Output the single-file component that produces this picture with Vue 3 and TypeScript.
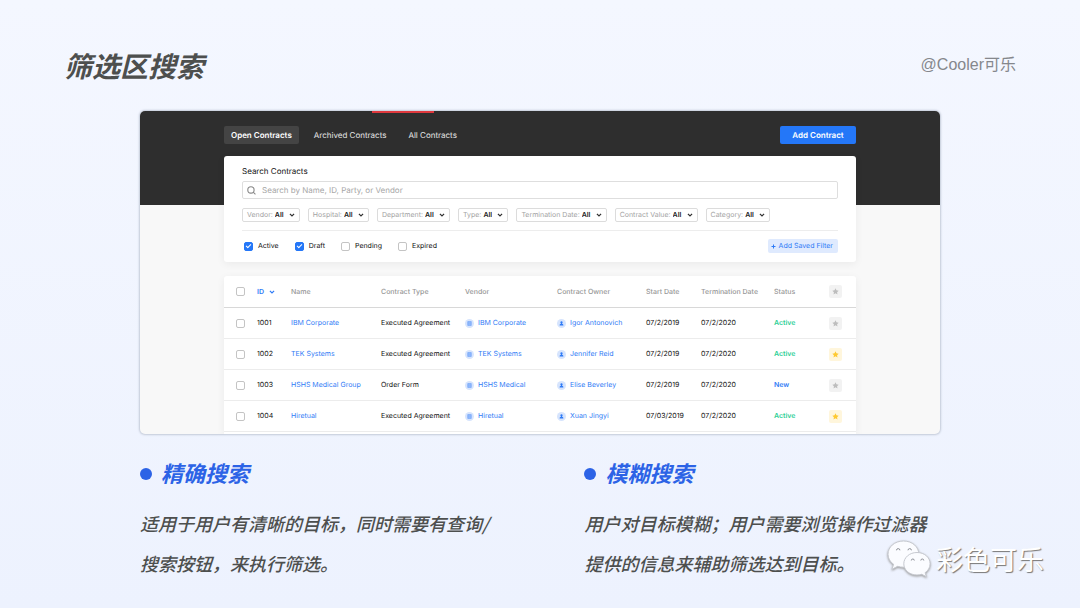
<script setup lang="ts">
import { ref } from 'vue'

interface Contract {
  id: string
  name: string
  type: string
  vendor: string
  owner: string
  start: string
  end: string
  status: 'Active' | 'New'
  starred: boolean
  selected: boolean
}

const tabs = ['Open Contracts', 'Archived Contracts', 'All Contracts']
const activeTab = ref(tabs[0])
const query = ref('')

const filters = ['Vendor', 'Hospital', 'Department', 'Type', 'Termination Date', 'Contract Value', 'Category']

const states = ref([
  { label: 'Active', checked: true },
  { label: 'Draft', checked: true },
  { label: 'Pending', checked: false },
  { label: 'Expired', checked: false },
])

const columns = ['Name', 'Contract Type', 'Vendor', 'Contract Owner', 'Start Date', 'Termination Date', 'Status']

const contracts = ref<Contract[]>([
  { id: '1001', name: 'IBM Corporate', type: 'Executed Agreement', vendor: 'IBM Corporate', owner: 'Igor Antonovich', start: '07/2/2019', end: '07/2/2020', status: 'Active', starred: false, selected: false },
  { id: '1002', name: 'TEK Systems', type: 'Executed Agreement', vendor: 'TEK Systems', owner: 'Jennifer Reid', start: '07/2/2019', end: '07/2/2020', status: 'Active', starred: true, selected: false },
  { id: '1003', name: 'HSHS Medical Group', type: 'Order Form', vendor: 'HSHS Medical', owner: 'Elise Beverley', start: '07/2/2019', end: '07/2/2020', status: 'New', starred: false, selected: false },
  { id: '1004', name: 'Hiretual', type: 'Executed Agreement', vendor: 'Hiretual', owner: 'Xuan Jingyi', start: '07/03/2019', end: '07/2/2020', status: 'Active', starred: true, selected: false },
])

const notes = [
  { title: '精确搜索', lines: ['适用于用户有清晰的目标，同时需要有查询/', '搜索按钮，来执行筛选。'] },
  { title: '模糊搜索', lines: ['用户对目标模糊；用户需要浏览操作过滤器', '提供的信息来辅助筛选达到目标。'] },
]

const starPath = 'M8 .8l2.200 4.600 5 .7-3.600 3.500.9 5L8 12.200l-4.500 2.400.9-5L.8 6.100l5-.7z'
</script>

<template>
  <div class="slide">
    <header class="top">
      <h1>筛选区搜索</h1>
      <span class="handle">@Cooler可乐</span>
    </header>

    <main class="content">
      <section class="app">
        <div class="bar">
          <nav class="tabs">
            <button
              v-for="tab in tabs"
              :key="tab"
              type="button"
              class="tab"
              :class="{ current: tab === activeTab }"
              @click="activeTab = tab"
            >{{ tab }}</button>
          </nav>
          <button type="button" class="add">Add Contract</button>
        </div>

        <div class="panels">
          <div class="panel search">
            <label class="search-title" for="query">Search Contracts</label>
            <div class="search-box">
              <svg viewBox="0 0 16 16" aria-hidden="true">
                <circle cx="7" cy="7" r="5.6" />
                <path d="M11 11l4 4" />
              </svg>
              <input id="query" v-model="query" type="text" placeholder="Search by Name, ID, Party, or Vendor">
            </div>

            <div class="filters">
              <label v-for="f in filters" :key="f" class="filter">
                <span>{{ f }}:</span>
                <select><option>All</option></select>
                <svg viewBox="0 0 10 10" aria-hidden="true"><path d="M1.5 3.2L5 6.7l3.5-3.5" /></svg>
              </label>
            </div>

            <div class="states">
              <label v-for="s in states" :key="s.label" class="state">
                <input v-model="s.checked" type="checkbox" class="box">
                <span>{{ s.label }}</span>
              </label>
              <button type="button" class="save">
                <svg viewBox="0 0 10 10" aria-hidden="true"><path d="M5 1v8M1 5h8" /></svg>
                Add Saved Filter
              </button>
            </div>
          </div>

          <div class="panel list">
            <table>
              <colgroup>
                <col class="c-check"><col class="c-id"><col class="c-name"><col class="c-type"><col class="c-vendor">
                <col class="c-owner"><col class="c-start"><col class="c-end"><col class="c-status"><col class="c-star">
              </colgroup>
              <thead>
                <tr>
                  <th class="check"><input type="checkbox" class="box" aria-label="Select all"></th>
                  <th>
                    <button type="button" class="sort">
                      ID
                      <svg viewBox="0 0 10 10" aria-hidden="true"><path d="M1.5 3.2L5 6.7l3.5-3.5" /></svg>
                    </button>
                  </th>
                  <th v-for="c in columns" :key="c">{{ c }}</th>
                  <th>
                    <button type="button" class="star" aria-label="Starred">
                      <svg viewBox="0 0 16 16"><path :d="starPath" /></svg>
                    </button>
                  </th>
                </tr>
              </thead>
              <tbody>
                <tr v-for="c in contracts" :key="c.id">
                  <td class="check"><input v-model="c.selected" type="checkbox" class="box" :aria-label="`Select ${c.id}`"></td>
                  <td>{{ c.id }}</td>
                  <td><a href="#">{{ c.name }}</a></td>
                  <td>{{ c.type }}</td>
                  <td>
                    <a href="#" class="with-icon">
                      <svg viewBox="0 0 18 18" aria-hidden="true">
                        <circle class="disc" cx="9" cy="9" r="9" />
                        <path class="soft" d="M5.5 5h7v8h-7z" />
                        <path class="lines" d="M5.5 5h7v8h-7zM5.5 7.7h7M5.5 10.3h7" />
                      </svg>
                      {{ c.vendor }}
                    </a>
                  </td>
                  <td>
                    <a href="#" class="with-icon">
                      <svg viewBox="0 0 18 18" aria-hidden="true">
                        <circle class="disc" cx="9" cy="9" r="9" />
                        <path class="solid" d="M9 4.400a2.200 2.200 0 0 1 1.200 4.100v1.200c1.600.4 2.600 1.300 2.600 3.500H5.200c0-2.200 1-3.100 2.600-3.500V8.500A2.200 2.200 0 0 1 9 4.400z" />
                      </svg>
                      {{ c.owner }}
                    </a>
                  </td>
                  <td>{{ c.start }}</td>
                  <td>{{ c.end }}</td>
                  <td class="status" :class="c.status.toLowerCase()">{{ c.status }}</td>
                  <td>
                    <button type="button" class="star" :class="{ on: c.starred }" :aria-label="`Star ${c.id}`" @click="c.starred = !c.starred">
                      <svg viewBox="0 0 16 16"><path :d="starPath" /></svg>
                    </button>
                  </td>
                </tr>
              </tbody>
            </table>
          </div>
        </div>
        <span class="marker" />
      </section>

      <section class="notes">
        <article v-for="n in notes" :key="n.title">
          <h2>{{ n.title }}</h2>
          <p><template v-for="(line, i) in n.lines" :key="line"><br v-if="i > 0">{{ line }}</template></p>
        </article>
      </section>
    </main>

    <div class="watermark">
      <svg viewBox="0 0 44 38" aria-hidden="true">
        <path class="bubble" d="M16.5 1C7.600 1 1 7 1 14.200c0 4.200 2.200 7.700 5.600 10.100L5 29.300l5.700-3c1.900.6 3.700.9 5.800.9 8.900 0 15.300-5.800 15.300-13S25.400 1 16.500 1z" />
        <path class="bubble" d="M30 12.500c-7.600 0-13.200 5.100-13.200 11.300S22.400 35 30 35c1.700 0 3.200-.2 4.700-.7l4.700 2.400-1.300-4c3-2.100 5-5.200 5-8.900 0-6.200-5.500-11.300-13.100-11.300z" />
        <path class="eye" d="M9.500 10.300a1.700 1.700 0 1 1 3.400 0M21 10.300a1.700 1.700 0 1 1 3.400 0M24.300 20.500a1.500 1.500 0 1 1 3 0M33.800 20.500a1.500 1.500 0 1 1 3 0" />
      </svg>
      <span>彩色可乐</span>
    </div>
  </div>
</template>

<style>
body {
  margin: 0;
}
</style>

<style scoped>
.slide {
  position: relative;
  box-sizing: border-box;
  min-height: 100vh;
  overflow: hidden;
  background: linear-gradient(#f4f7ff, #edf2fe);
  color: #4d4f4e;
  font-family: "Noto Sans CJK SC", sans-serif;
}

button,
input,
select {
  margin: 0;
  padding: 0;
  border: 0;
  background: none;
  color: inherit;
  font: inherit;
  letter-spacing: inherit;
  text-rendering: inherit;
}

button {
  cursor: pointer;
}

.top {
  display: flex;
  align-items: center;
  justify-content: space-between;
  padding: 45px 64px 0;
}

h1,
h2,
p {
  margin: 0;
  font-style: italic;
  font-weight: 500;
  white-space: nowrap;
}

h1 {
  font-size: 28px;
  font-weight: 700;
  line-height: 40px;
}

.handle {
  color: #85878c;
  font-family: "Liberation Sans", "Noto Sans CJK SC", sans-serif;
  font-size: 16px;
  line-height: 20px;
}

.content {
  padding: 26px 140px 0;
}

.app {
  position: relative;
  overflow: hidden;
  border-radius: 5px;
  background: #f8f8f8;
  box-shadow: 0 0 2px 1px #c3cad8;
  color: #111;
  font-family: Inter, sans-serif;
  font-size: 7px;
  font-weight: 400;
  line-height: 10px;
  text-rendering: geometricPrecision;
}

.bar {
  display: flex;
  justify-content: space-between;
  padding: 15px 84px 61px;
  background: #2e2e2e;
}

.tabs {
  display: flex;
  gap: 8px;
}

.tab,
.add {
  height: 18px;
  border-radius: 2px;
  font-size: 8px;
}

.tab {
  padding: 0 7px;
  color: #e6e6e6;
}

.tab.current {
  background: #444;
  color: #fff;
  font-weight: 600;
}

.add {
  width: 76px;
  background: #2477f8;
  color: #fff;
  font-weight: 600;
}

.marker {
  position: absolute;
  top: 0;
  left: 29%;
  width: 62px;
  height: 2px;
  background: #e0393e;
}

.panels {
  display: flex;
  flex-direction: column;
  gap: 14px;
  margin: -49px 84px 0;
}

.panel {
  background: #fff;
  box-shadow: 0 2px 8px rgba(0, 0, 0, 0.06);
}

.search {
  padding: 10px 18px 9px;
  border-radius: 3px;
}

.search-title {
  display: block;
  font-size: 8px;
}

.search-box {
  display: flex;
  align-items: center;
  gap: 6px;
  box-sizing: border-box;
  height: 18px;
  margin-top: 5px;
  padding: 0 4px;
  border: 1px solid #dedede;
  border-radius: 2px;
}

.search-box svg {
  width: 9px;
  height: 9px;
  fill: none;
  stroke: #888;
  stroke-width: 2;
}

.search-box input {
  flex: 1;
  outline: 0;
  font-size: 8px;
}

.search-box input::placeholder {
  color: #a6a6a6;
}

.filters {
  display: flex;
  gap: 8px;
  padding: 9px 0 8px;
  border-bottom: 1px solid #ededed;
}

.filter {
  display: flex;
  align-items: center;
  box-sizing: border-box;
  height: 14px;
  padding: 0 4px;
  border: 1px solid #dcdcdc;
  border-radius: 2px;
  color: #a3a3a3;
  white-space: nowrap;
}

.filter select {
  margin: 0 5px 0 2px;
  appearance: none;
  color: #222;
  font-weight: 600;
}

.filter svg,
.sort svg {
  width: 6px;
  height: 6px;
  fill: none;
  stroke: #333;
  stroke-width: 2;
}

.states {
  display: flex;
  align-items: center;
  gap: 16px;
  margin-top: 8px;
  padding-left: 2px;
}

.state {
  display: flex;
  align-items: center;
  gap: 5px;
}

.box {
  display: grid;
  place-items: center;
  box-sizing: border-box;
  width: 9px;
  height: 9px;
  appearance: none;
  border: 1px solid #c4c4c4;
  border-radius: 2px;
  background: #fff;
}

.box:checked {
  border-color: #2477f8;
  background: #2477f8;
}

.box:checked::after {
  width: 5px;
  height: 3px;
  margin-bottom: 1px;
  border: solid #fff;
  border-width: 0 0 1px 1px;
  box-sizing: border-box;
  content: "";
  transform: rotate(-45deg);
}

.save {
  display: flex;
  align-items: center;
  gap: 3px;
  height: 14px;
  margin-left: auto;
  padding: 0 5px 0 3px;
  border-radius: 2px;
  background: #dfeafe;
  color: #2f7bf6;
}

.save svg {
  width: 5px;
  height: 5px;
  stroke: #2f7bf6;
  stroke-width: 2;
}

.list {
  padding-bottom: 2px;
  border-radius: 3px 3px 0 0;
}

table {
  width: 100%;
  table-layout: fixed;
  border-collapse: separate;
  border-spacing: 0;
}

.c-check { width: 33px; }
.c-id { width: 34px; }
.c-name { width: 90px; }
.c-type { width: 84px; }
.c-vendor { width: 92px; }
.c-owner { width: 89px; }
.c-start { width: 55px; }
.c-end { width: 73px; }
.c-status { width: 55px; }
.c-star { width: 27px; }

th,
td {
  box-sizing: border-box;
  height: 31px;
  padding: 0;
  border-bottom: 1px solid #ececec;
  text-align: left;
  white-space: nowrap;
}

th {
  height: 32px;
  border-bottom-color: #d8d8d8;
  color: #969696;
  font-weight: 500;
}

.check {
  padding-left: 12px;
}

.sort {
  display: flex;
  align-items: center;
  gap: 5px;
  color: #2f7bf6;
  font-weight: 600;
}

.sort svg {
  stroke: #2f7bf6;
}

a {
  color: #2f7bf6;
  text-decoration: none;
}

.with-icon {
  display: flex;
  align-items: center;
  gap: 4px;
}

.with-icon svg {
  width: 9px;
  height: 9px;
}

.disc { fill: #d6e4fd; }
.soft { fill: #a9c9fc; }
.lines { fill: none; stroke: #5b97f8; }
.solid { fill: #2f7bf6; }

.status {
  font-weight: 600;
}

.status.active { color: #2fcf97; }
.status.new { color: #2f7bf6; }

.star {
  display: grid;
  place-items: center;
  width: 13px;
  height: 13px;
  border-radius: 2px;
  background: #f2f2f2;
}

.star svg {
  width: 7px;
  height: 7px;
  fill: #bdbdbd;
}

.star.on {
  background: #fff6dc;
}

.star.on svg {
  fill: #fec931;
}

.notes {
  display: grid;
  grid-template-columns: 5fr 4fr;
  margin-top: 23px;
}

article {
  min-width: 0;
}

h2 {
  display: flex;
  align-items: center;
  gap: 9px;
  color: #2c63e6;
  font-size: 22px;
  font-weight: 700;
  line-height: 30px;
}

h2::before {
  width: 12px;
  height: 12px;
  margin-top: 4px;
  border-radius: 50%;
  background: #2c63e6;
  content: "";
}

p {
  margin-top: 16px;
  font-size: 18px;
  line-height: 40px;
}

.watermark {
  position: absolute;
  right: 36px;
  bottom: 29px;
  display: flex;
  align-items: center;
  gap: 5px;
  color: #fff;
  font-size: 27px;
  line-height: 40px;
  text-shadow: 1px 1px 1px #777;
}

.watermark svg {
  width: 44px;
  height: 38px;
  filter: drop-shadow(0 1px 1px #999);
}

.bubble {
  fill: #fbfcff;
  stroke: #c6c9d0;
  stroke-width: 1;
}

.eye {
  fill: none;
  stroke: #8d9097;
  stroke-width: 1;
}
</style>
